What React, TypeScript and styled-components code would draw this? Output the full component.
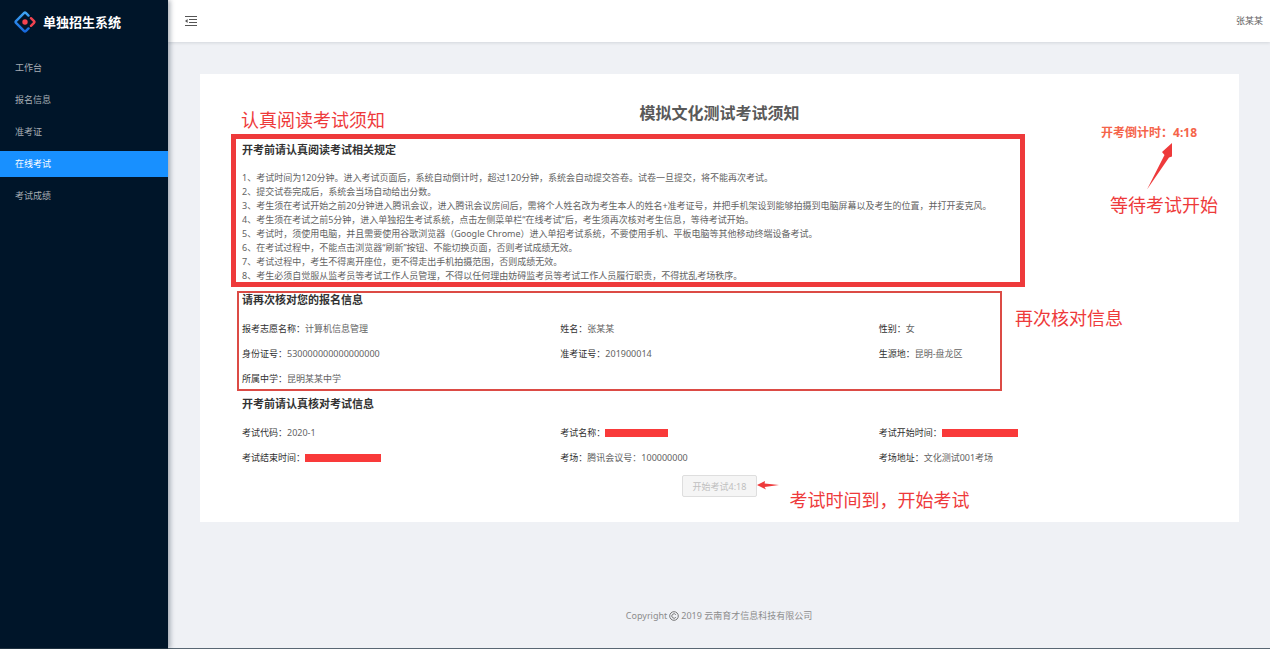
import React from "react";
import styled, { createGlobalStyle } from "styled-components";

const RED = "#ee3a3b";

const GlobalStyle = createGlobalStyle`
  * { box-sizing: border-box; }
  body {
    margin: 0;
    font-family: "Noto Sans", "Noto Sans CJK SC", sans-serif;
    font-size: 9px;
    line-height: 14px;
    color: #636363;
    background: #eff1f5;
  }
`;

const Shell = styled.div`
  display: flex;
  min-height: 100vh;
`;

const Sidebar = styled.aside`
  position: relative;
  flex: 0 0 168px;
  background: #001529;
  border-bottom: 1px solid #1d2f3e;
  box-shadow: 2px 0 5px rgba(0, 21, 41, 0.35);
  z-index: 1;
`;

const Brand = styled.div`
  display: flex;
  align-items: center;
  gap: 7px;
  height: 43px;
  padding-left: 14px;
`;

const BrandName = styled.h1`
  margin: 0;
  font-size: 13px;
  line-height: 20px;
  font-weight: 700;
  color: #fff;
`;

const Menu = styled.nav`
  display: flex;
  flex-direction: column;
  gap: 6px;
  padding-top: 12px;
`;

const MenuLink = styled.a<{ $active?: boolean }>`
  padding-left: 15px;
  line-height: 26px;
  text-decoration: none;
  color: ${(p) => (p.$active ? "#fff" : "#a6adb4")};
  background: ${(p) => (p.$active ? "#1890ff" : "transparent")};
`;

const Main = styled.div`
  flex: 1;
  min-width: 0;
  display: flex;
  flex-direction: column;
  border-bottom: 1px solid #596773;
`;

const TopBar = styled.header`
  display: flex;
  align-items: center;
  justify-content: space-between;
  height: 42px;
  padding: 0 7px 0 16px;
  background: #fff;
  box-shadow: 0 1px 3px rgba(0, 21, 41, 0.12);
`;

const FoldButton = styled.button`
  display: flex;
  padding: 0;
  border: 0;
  background: none;
  color: #555;
`;

const Card = styled.main`
  position: relative;
  margin: 32px 31px 32px 32px;
  padding: 27px 42px 25px;
  background: #fff;
`;

const Title = styled.h2`
  margin: 0;
  font-size: 16px;
  line-height: 24px;
  font-weight: 700;
  text-align: center;
  color: #595959;
`;

const Countdown = styled.div`
  font-size: 12px;
  line-height: 16px;
  font-weight: 700;
  text-align: right;
  color: #f5644a;
`;

const Section = styled.section<{ $gap: number }>`
  position: relative;
  padding-top: ${(p) => p.$gap}px;
`;

const SectionTitle = styled.h3`
  margin: 0 0 8px;
  font-size: 11px;
  line-height: 16px;
  font-weight: 700;
  color: #333;
`;

const Rules = styled.ol`
  margin: 0;
  padding: 5px 0 0;
  list-style: none;
`;

const Fields = styled.dl`
  display: grid;
  grid-template-columns: repeat(3, 1fr);
  margin: 0;
  line-height: 25px;
`;

const Field = styled.div`
  display: flex;
  align-items: center;
`;

const Term = styled.dt`
  color: #303030;
`;

const Value = styled.dd`
  margin: 0;
`;

const Redaction = styled.span<{ $width: number }>`
  display: block;
  width: ${(p) => p.$width}px;
  height: 8px;
  background: #f93a3a;
`;

const Actions = styled.div`
  display: flex;
  justify-content: center;
  padding-top: 5px;
`;

const StartButton = styled.button`
  height: 22px;
  padding: 0 10px;
  border: 1px solid #dedede;
  border-radius: 2px;
  font-family: inherit;
  font-size: 9px;
  color: #bfbfbf;
  background: #f5f5f5;
`;

const Frame = styled.div<{ $thick?: boolean }>`
  position: absolute;
  pointer-events: none;
  top: ${(p) => (p.$thick ? -7 : 8)}px;
  bottom: ${(p) => (p.$thick ? -4 : 0)}px;
  left: ${(p) => (p.$thick ? -11 : -5)}px;
  right: ${(p) => (p.$thick ? 172 : 195)}px;
  border: ${(p) => (p.$thick ? 5 : 2)}px solid ${(p) => (p.$thick ? RED : "#dc4b45")};
`;

const Note = styled.div<{ $top: number; $left?: number; $right?: number }>`
  position: absolute;
  top: ${(p) => p.$top}px;
  ${(p) => (p.$left !== undefined ? `left: ${p.$left}px;` : "")}
  ${(p) => (p.$right !== undefined ? `right: ${p.$right}px;` : "")}
  font-size: 18px;
  line-height: 26px;
  white-space: nowrap;
  color: ${RED};
`;

const UpArrow = styled.svg`
  position: absolute;
  top: 67px;
  right: 65px;
`;

const ActionAnchor = styled.div`
  position: relative;
`;

const LeftArrow = styled.svg`
  position: absolute;
  left: 100%;
  top: 4px;
`;

const ActionNote = styled(Note)`
  left: calc(100% + 32px);
`;

const Footer = styled.footer`
  display: flex;
  align-items: center;
  justify-content: center;
  gap: 2px;
  margin-top: auto;
  padding-bottom: 25px;
  color: #8c8c8c;
`;

const MENU = ["工作台", "报名信息", "准考证", "在线考试", "考试成绩"];

const RULES = [
  "1、考试时间为120分钟。进入考试页面后，系统自动倒计时，超过120分钟，系统会自动提交答卷。试卷一旦提交，将不能再次考试。",
  "2、提交试卷完成后，系统会当场自动给出分数。",
  "3、考生须在考试开始之前20分钟进入腾讯会议，进入腾讯会议房间后，需将个人姓名改为考生本人的姓名+准考证号，并把手机架设到能够拍摄到电脑屏幕以及考生的位置，并打开麦克风。",
  "4、考生须在考试之前5分钟，进入单独招生考试系统，点击左侧菜单栏“在线考试”后，考生须再次核对考生信息，等待考试开始。",
  "5、考试时，须使用电脑，并且需要使用谷歌浏览器（Google Chrome）进入单招考试系统，不要使用手机、平板电脑等其他移动终端设备考试。",
  "6、在考试过程中，不能点击浏览器“刷新”按钮、不能切换页面，否则考试成绩无效。",
  "7、考试过程中，考生不得离开座位，更不得走出手机拍摄范围，否则成绩无效。",
  "8、考生必须自觉服从监考员等考试工作人员管理，不得以任何理由妨碍监考员等考试工作人员履行职责，不得扰乱考场秩序。",
];

type Item = { term: string; value: React.ReactNode };

const APPLICANT: Item[] = [
  { term: "报考志愿名称：", value: "计算机信息管理" },
  { term: "姓名：", value: "张某某" },
  { term: "性别：", value: "女" },
  { term: "身份证号：", value: "530000000000000000" },
  { term: "准考证号：", value: "201900014" },
  { term: "生源地：", value: "昆明-盘龙区" },
  { term: "所属中学：", value: "昆明某某中学" },
];

const EXAM: Item[] = [
  { term: "考试代码：", value: "2020-1" },
  { term: "考试名称：", value: <Redaction $width={63} /> },
  { term: "考试开始时间：", value: <Redaction $width={76} /> },
  { term: "考试结束时间：", value: <Redaction $width={76} /> },
  { term: "考场：", value: "腾讯会议号：100000000" },
  { term: "考场地址：", value: "文化测试001考场" },
];

function FieldList({ items }: { items: Item[] }) {
  return (
    <Fields>
      {items.map((item) => (
        <Field key={item.term}>
          <Term>{item.term}</Term>
          <Value>{item.value}</Value>
        </Field>
      ))}
    </Fields>
  );
}

function Logo() {
  return (
    <svg width="22" height="22" viewBox="0 0 22 22" fill="none" aria-hidden="true">
      <defs>
        <linearGradient id="blue" x1="0" y1="0" x2="0" y2="1">
          <stop offset="0" stopColor="#3fa4f4" />
          <stop offset="1" stopColor="#1668dc" />
        </linearGradient>
      </defs>
      <path
        d="M14.5 4.6 L11.8 1.9 Q11 1.1 10.2 1.9 L2 10.1 Q1.1 11 2 11.9 L10.2 20.1 Q11 20.9 11.8 20.1 L14.5 17.4"
        stroke="url(#blue)"
        strokeWidth="2.4"
        strokeLinecap="round"
      />
      <path d="M17 7.2 L20 10.2 Q20.8 11 20 11.8 L17 14.8" stroke="#f0434f" strokeWidth="2.4" strokeLinecap="round" />
      <circle cx="11" cy="11" r="2.7" fill="#f5434f" />
    </svg>
  );
}

export default function App() {
  return (
    <>
      <GlobalStyle />
      <Shell>
        <Sidebar>
          <Brand>
            <Logo />
            <BrandName>单独招生系统</BrandName>
          </Brand>
          <Menu>
            {MENU.map((label) => (
              <MenuLink key={label} href="#" $active={label === "在线考试"}>
                {label}
              </MenuLink>
            ))}
          </Menu>
        </Sidebar>
        <Main>
          <TopBar>
            <FoldButton type="button" aria-label="收起菜单">
              <svg width="14" height="12" viewBox="0 0 14 12" aria-hidden="true">
                <path d="M1 1.5H13M5 4.5H13M5 7.5H13M1 10.5H13" stroke="currentColor" strokeWidth="1" />
                <path d="M1 6L3.6 4V8Z" fill="currentColor" />
              </svg>
            </FoldButton>
            <span>张某某</span>
          </TopBar>
          <Card>
            <Title>模拟文化测试考试须知</Title>
            <Countdown>开考倒计时：4:18</Countdown>
            <Section $gap={1}>
              <SectionTitle>开考前请认真阅读考试相关规定</SectionTitle>
              <Rules>
                {RULES.map((rule) => (
                  <li key={rule}>{rule}</li>
                ))}
              </Rules>
              <Frame $thick />
            </Section>
            <Section $gap={9}>
              <SectionTitle>请再次核对您的报名信息</SectionTitle>
              <FieldList items={APPLICANT} />
              <Frame />
            </Section>
            <Section $gap={5}>
              <SectionTitle>开考前请认真核对考试信息</SectionTitle>
              <FieldList items={EXAM} />
            </Section>
            <Actions>
              <ActionAnchor>
                <StartButton type="button" disabled>
                  开始考试4:18
                </StartButton>
                <LeftArrow width="22" height="12" viewBox="0 0 22 12" aria-hidden="true">
                  <path d="M0 6L8 2L7.6 4.4L22 6L7.6 8L9 10.4Z" fill={RED} />
                </LeftArrow>
                <ActionNote $top={12}>考试时间到，开始考试</ActionNote>
              </ActionAnchor>
            </Actions>
            <Note $top={33} $left={41}>认真阅读考试须知</Note>
            <Note $top={118} $right={21}>等待考试开始</Note>
            <Note $top={231} $right={116}>再次核对信息</Note>
            <UpArrow width="28" height="50" viewBox="0 0 28 50" aria-hidden="true">
              <path d="M26 2L16 11L18.5 14L1 48.5L23 16.5L26 15.5Z" fill={RED} />
            </UpArrow>
          </Card>
          <Footer>
            <span>Copyright</span>
            <svg width="10" height="10" viewBox="0 0 10 10" fill="none" stroke="#777" aria-hidden="true">
              <circle cx="5" cy="5" r="4.3" />
              <path d="M6.8 3.7A2.2 2.2 0 1 0 6.8 6.3" />
            </svg>
            <span>2019 云南育才信息科技有限公司</span>
          </Footer>
        </Main>
      </Shell>
    </>
  );
}
